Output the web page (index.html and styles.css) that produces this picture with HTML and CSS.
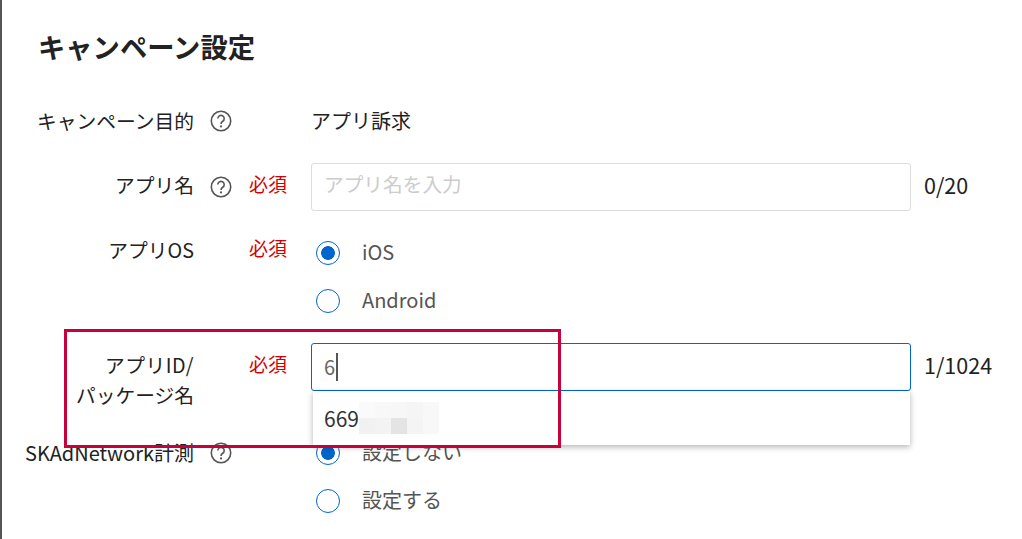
FILE: index.html
```html
<!DOCTYPE html>
<html lang="ja">
<head>
  <meta charset="UTF-8">
  <title>キャンペーン設定</title>
  <link rel="stylesheet" href="styles.css">
</head>
<body>
  <div class="page">
    <h1>キャンペーン設定</h1>

    <div class="row row-first">
      <div class="label label-first">キャンペーン目的</div>
      <div class="help"><svg width="22" height="22" viewBox="0 0 22 22"><circle cx="11" cy="11" r="9.7" /><path d="M7.8 8.6a3.2 3.2 0 1 1 4.9 2.7c-1.1.7-1.7 1.2-1.7 2.6" /><circle class="dot" cx="11" cy="16.4" r="1.1" /></svg></div>
      <div class="required"></div>
      <div class="plain">アプリ訴求</div>
    </div>

    <div class="row">
      <div class="label">アプリ名</div>
      <div class="help"><svg width="22" height="22" viewBox="0 0 22 22"><circle cx="11" cy="11" r="9.7" /><path d="M7.8 8.6a3.2 3.2 0 1 1 4.9 2.7c-1.1.7-1.7 1.2-1.7 2.6" /><circle class="dot" cx="11" cy="16.4" r="1.1" /></svg></div>
      <div class="required">必須</div>
      <div class="input placeholder">アプリ名を入力</div>
      <div class="count">0/20</div>
    </div>

    <div class="row">
      <div class="label label-os">アプリOS</div>
      <div class="help"></div>
      <div class="required required-os">必須</div>
      <div class="radios">
        <div class="radio checked"><span class="mark"></span><span class="radio-text">iOS</span></div>
        <div class="radio"><span class="mark"></span><span class="radio-text">Android</span></div>
      </div>
    </div>

    <div class="row">
      <div class="label"><span class="wide">アプリID/</span><br>パッケージ名</div>
      <div class="help"></div>
      <div class="required">必須</div>
      <div class="field">
        <div class="input active">6<span class="caret"></span></div>
        <div class="suggest">669<svg class="mosaic" width="80" height="32" viewBox="0 0 80 32">
          <rect width="16" height="16" x="0" y="0" fill="#fafafa" />
          <rect width="16" height="16" x="16" y="0" fill="#f8f8f8" />
          <rect width="16" height="16" x="32" y="0" fill="#f7f7f7" />
          <rect width="16" height="16" x="48" y="0" fill="#f5f5f5" />
          <rect width="16" height="16" x="64" y="0" fill="#f8f8f8" />
          <rect width="16" height="16" x="0" y="16" fill="#f1f1f1" />
          <rect width="16" height="16" x="16" y="16" fill="#f3f3f3" />
          <rect width="16" height="16" x="32" y="16" fill="#e4e4e4" />
          <rect width="16" height="16" x="48" y="16" fill="#f4f4f4" />
          <rect width="16" height="16" x="64" y="16" fill="#f8f8f8" />
        </svg></div>
      </div>
      <div class="count">1/1024</div>
    </div>

    <div class="row">
      <div class="label label-sk">SKAdNetwork計測</div>
      <div class="help"><svg width="22" height="22" viewBox="0 0 22 22"><circle cx="11" cy="11" r="9.7" /><path d="M7.8 8.6a3.2 3.2 0 1 1 4.9 2.7c-1.1.7-1.7 1.2-1.7 2.6" /><circle class="dot" cx="11" cy="16.4" r="1.1" /></svg></div>
      <div class="required"></div>
      <div class="radios">
        <div class="radio checked"><span class="mark"></span><span class="radio-text">設定しない</span></div>
        <div class="radio"><span class="mark"></span><span class="radio-text">設定する</span></div>
      </div>
    </div>
  </div>

  <div class="highlight"></div>
</body>
</html>
```

FILE: styles.css
```css
html, body {
  margin: 0;
  height: 539px;
  overflow: hidden;
  background: #fff;
}

body {
  font-family: "Noto Sans CJK JP", "Noto Sans", sans-serif;
  font-size: 20px;
  color: #222;
  position: relative;
}

.page {
  border-left: 2px solid #555;
  height: 539px;
  box-sizing: border-box;
  padding-left: 23px;
}

h1 {
  margin: 0 0 0 13px;
  padding-top: 27px;
  height: 97px;
  box-sizing: border-box;
  font-size: 27.3px;
  line-height: 38px;
  font-weight: 700;
}

.row {
  display: flex;
  align-items: flex-start;
  margin-bottom: 18px;
}

.label {
  width: 169px;
  text-align: right;
  font-size: 19.75px;
  line-height: 30px;
  padding-top: 7px;
  white-space: nowrap;
}

.label .wide {
  letter-spacing: 0.5px;
}

.label-first {
  padding-top: 9px;
}

.label-os {
  padding-top: 6px;
}

.label-sk {
  font-size: 20px;
  padding-top: 9px;
}

.help {
  width: 55px;
  height: 30px;
  padding-top: 13px;
  padding-left: 16px;
  box-sizing: border-box;
  flex: none;
}

.help svg {
  display: block;
  fill: none;
  stroke: #555;
  stroke-width: 1.6;
}

.help .dot {
  fill: #555;
  stroke: none;
}

.required {
  width: 62px;
  flex: none;
  font-size: 19px;
  color: #d40000;
  line-height: 30px;
  padding-top: 6px;
}

.required-os {
  padding-top: 4px;
}

.plain {
  line-height: 48px;
}

.input {
  width: 600px;
  height: 48px;
  box-sizing: border-box;
  border: 1px solid #ddd;
  border-radius: 3px;
  padding-left: 12px;
  line-height: 44px;
  display: flex;
  align-items: center;
}

.placeholder {
  color: #ccc;
  font-size: 19.7px;
  padding-bottom: 6px;
}

.active {
  border-color: #0066cc;
  color: #666;
}

.caret {
  width: 2px;
  height: 28px;
  margin-left: 1px;
  background: #555;
}

.count {
  margin-left: 13px;
  font-size: 21.5px;
  line-height: 44px;
}

.field {
  position: relative;
  height: 68px;
}

.suggest {
  position: absolute;
  left: 2px;
  top: 48px;
  width: 597px;
  height: 54px;
  box-sizing: border-box;
  padding-left: 11px;
  background: #fff;
  box-shadow: 0 2px 6px rgba(0, 0, 0, 0.3);
  display: flex;
  align-items: center;
  font-size: 21px;
  line-height: 26px;
  color: #333;
}

.suggest .mosaic {
  display: block;
  margin-top: 0;
}

.radios {
  display: flex;
  flex-direction: column;
}

.radio {
  height: 48px;
  display: flex;
  align-items: center;
  color: #555;
}

.radio-text {
  margin-bottom: 3px;
}

.mark {
  width: 24px;
  height: 24px;
  box-sizing: border-box;
  border: 1px solid #0066cc;
  border-radius: 50%;
  margin-left: 5px;
  margin-right: 22px;
  flex: none;
}

.checked .mark {
  background: radial-gradient(circle, #0066cc 0, #0066cc 6.5px, #fff 7.2px);
}

.highlight {
  position: absolute;
  left: 64px;
  top: 329px;
  width: 497px;
  height: 119px;
  box-sizing: border-box;
  border: 3px solid #c8003c;
}
```
